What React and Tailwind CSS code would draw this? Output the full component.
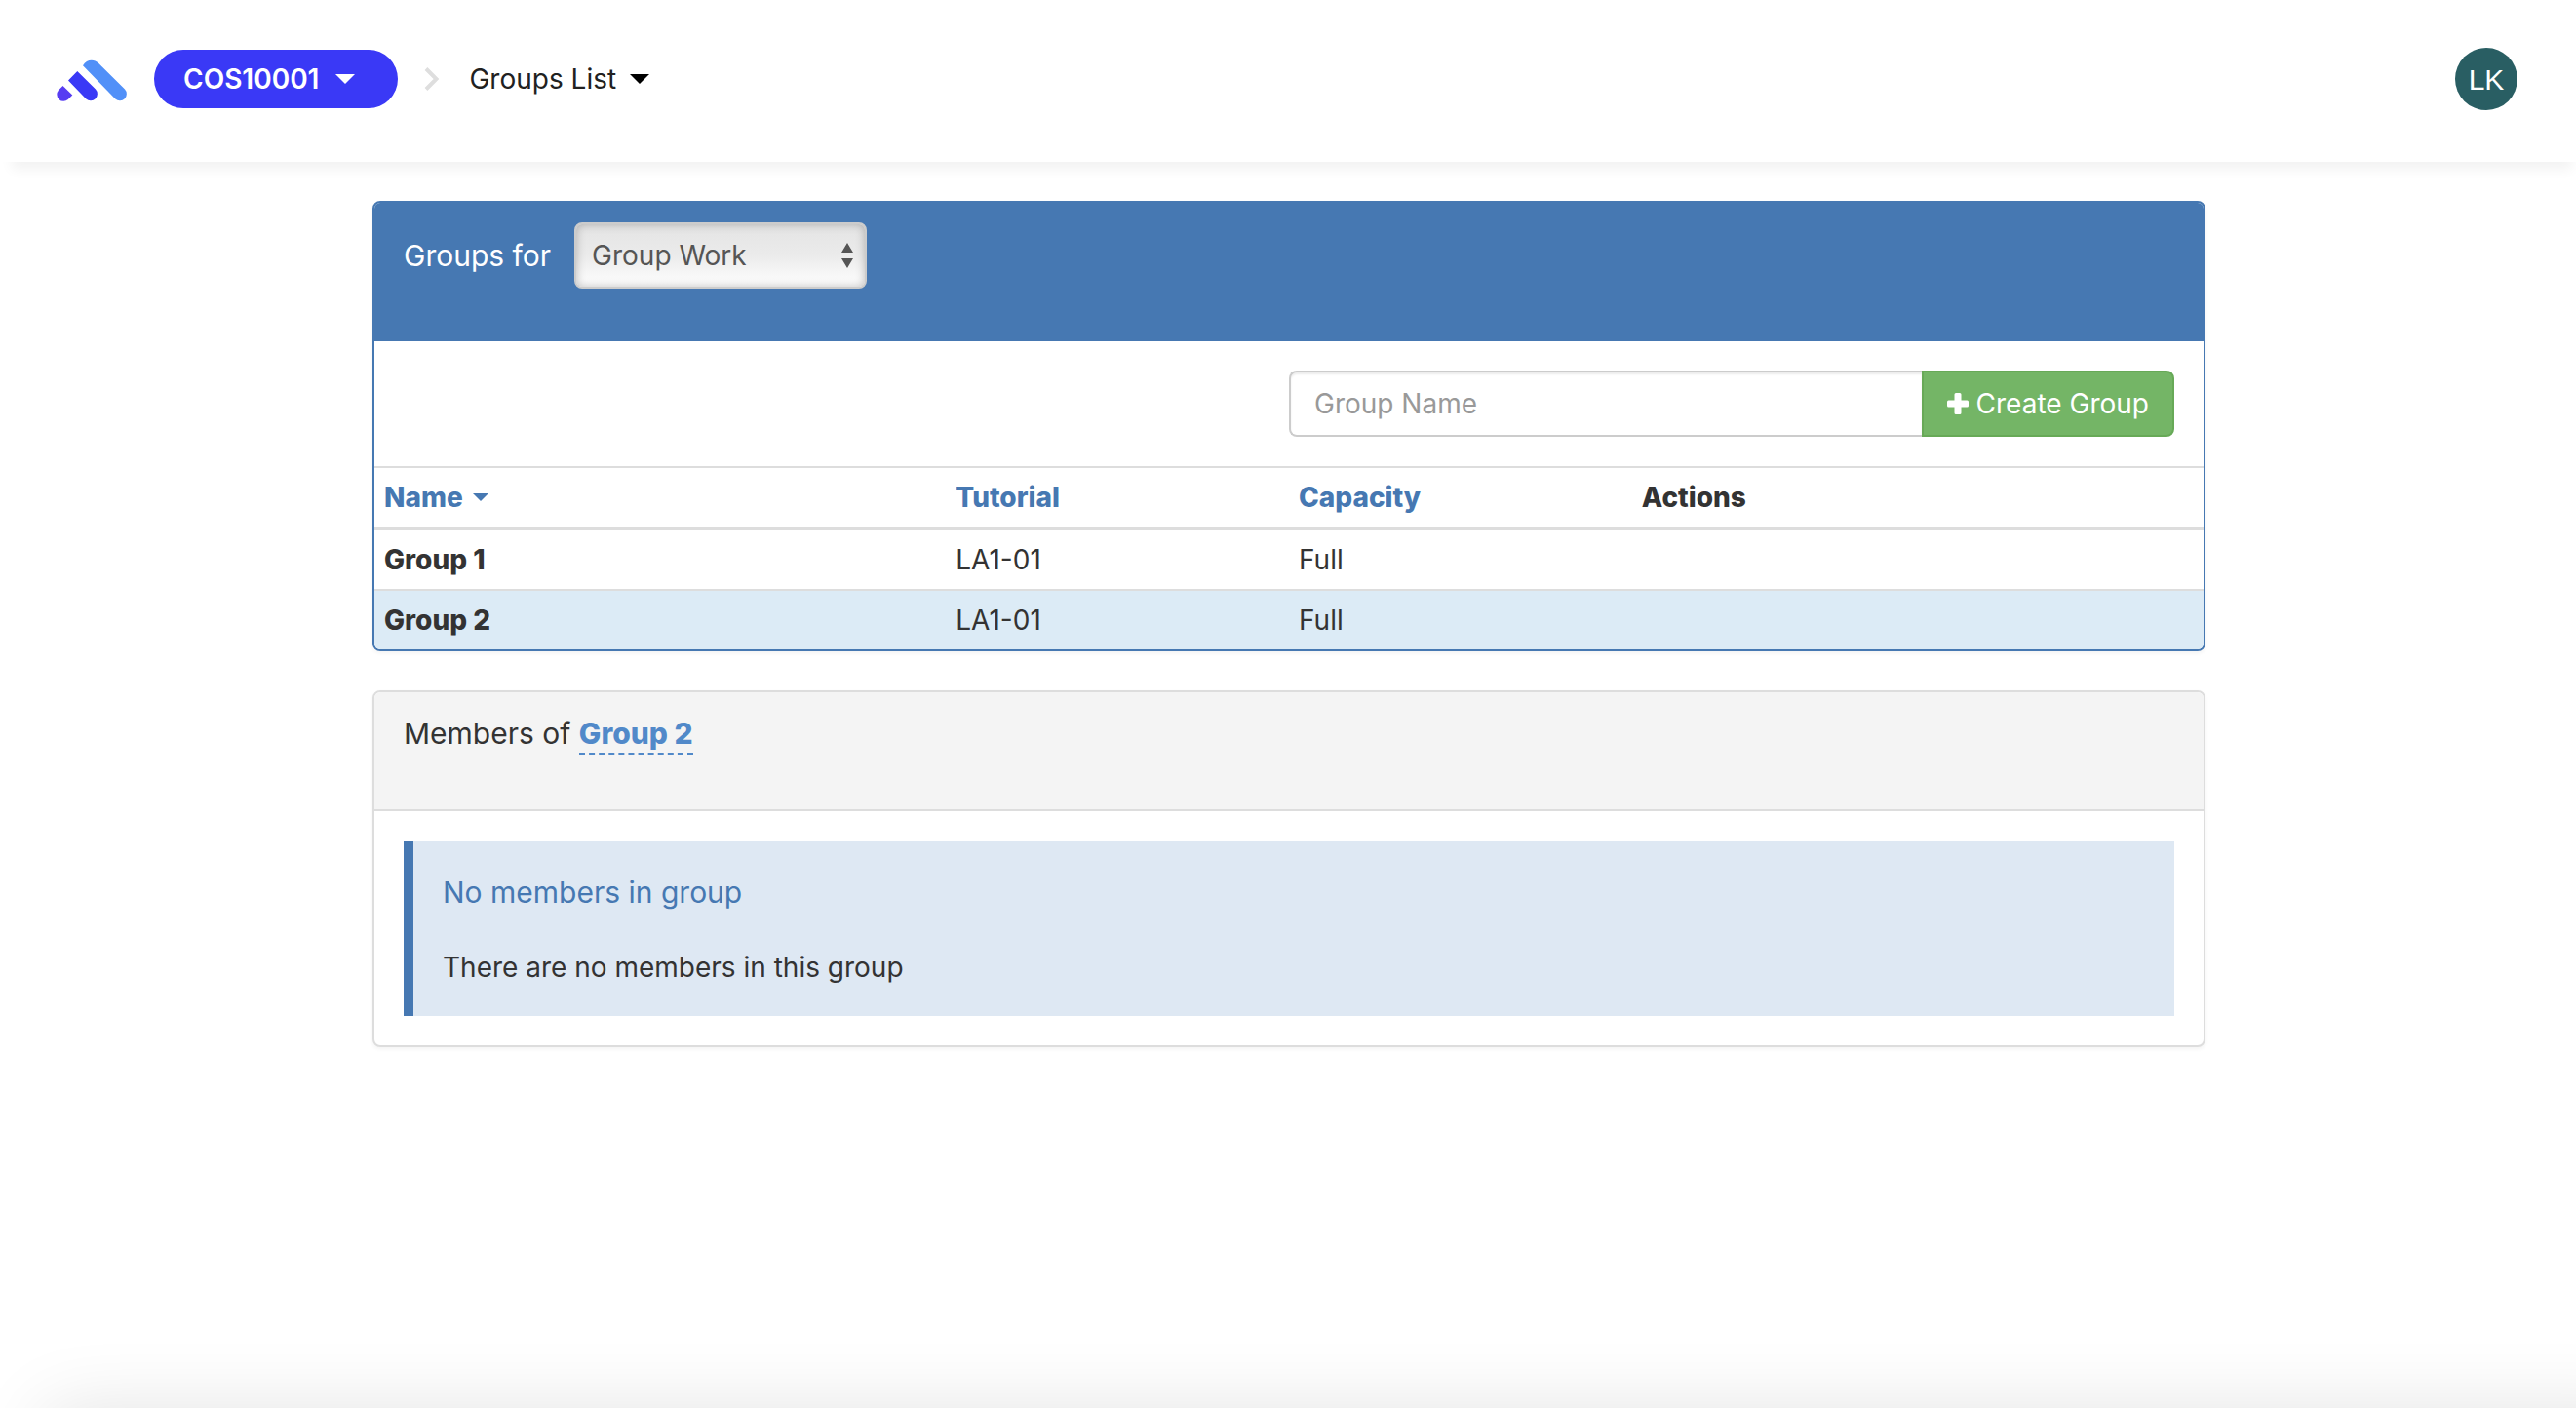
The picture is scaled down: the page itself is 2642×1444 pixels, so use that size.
const groups = [
  { name: "Group 1", tutorial: "LA1-01", capacity: "Full", selected: false },
  { name: "Group 2", tutorial: "LA1-01", capacity: "Full", selected: true },
];

function Logo() {
  return (
    <svg viewBox="0 -4 72 46" className="h-[46px] w-[72px]" aria-hidden="true">
      <path d="M6.5 26 L16.3 35.5 L11.8 40 A6.8 6.8 0 0 1 2 30.6 Z" fill="#573cf2" />
      <path d="M21.3 11 L40 29.6 A6.9 6.9 0 0 1 30.3 39.4 L12 20.6 Z" fill="#3a39f6" />
      <path d="M27 5.2 C31 -1.5 38.5 -1.5 43 2.8 L70 29.6 A6.9 6.9 0 0 1 60.3 39.4 Z" fill="#5190f8" />
    </svg>
  );
}

function Caret({ className }) {
  return (
    <svg viewBox="0 0 20 10" className={className} fill="currentColor" aria-hidden="true">
      <path d="M0 0h20L10 10z" />
    </svg>
  );
}

function Header() {
  return (
    <header className="flex h-[166px] items-center bg-white pb-1 pl-[58px] pr-[60px] shadow-[4px_16px_12px_-8px_rgba(0,0,0,0.05)]">
      <a href="#home" aria-label="Home">
        <Logo />
      </a>
      <button
        type="button"
        className="ml-7 flex h-[60px] items-center rounded-[30px] bg-[#3a39f6] pl-[30px] pr-11 font-semibold text-white"
      >
        COS10001
        <Caret className="ml-[17px] h-2.5 w-5" />
      </button>
      <svg viewBox="0 0 16 24" className="ml-[27px] h-6 w-4" fill="none" stroke="#dedede" strokeWidth="4" aria-hidden="true">
        <path d="M2 1.5 12.5 12 2 22.5" />
      </svg>
      <button type="button" className="ml-[30px] flex h-[60px] items-center text-[#212121]">
        Groups List
        <Caret className="ml-3.5 h-2.5 w-5 text-black" />
      </button>
      <button
        type="button"
        aria-label="Account"
        className="ml-auto flex size-16 items-center justify-center rounded-full bg-[#295e63] font-['Liberation_Sans',sans-serif] text-[30px] text-white"
      >
        LK
      </button>
    </header>
  );
}

function GroupsPanel() {
  return (
    <section className="overflow-hidden rounded-lg border-2 border-[#4678b2] bg-white shadow-[0_2px_4px_rgba(0,0,0,0.05)]">
      <div className="flex items-center bg-[#4678b2] px-[30px] pb-[54px] pt-5 text-white">
        <label htmlFor="group-set" className="text-[30px]">
          Groups for
        </label>
        <div className="relative ml-6 w-[300px]">
          <select
            id="group-set"
            className="h-[68px] w-full appearance-none rounded-lg border-2 border-[#ccc] bg-linear-to-b from-[#e4e4e4] via-[#ebebeb] to-white px-4 text-[#555] shadow-[inset_0_0_10px_rgba(0,0,0,0.25)]"
          >
            <option>Group Work</option>
          </select>
          <svg
            viewBox="0 0 12 26"
            className="pointer-events-none absolute right-3.5 top-[21px] h-[26px] w-3"
            fill="#555"
            aria-hidden="true"
          >
            <path d="M6 0l6 10H0zM6 26l6-10H0z" />
          </svg>
        </div>
      </div>

      <form className="flex justify-end p-[30px]" onSubmit={(e) => e.preventDefault()}>
        <div className="flex w-1/2">
          <input
            type="text"
            aria-label="Group Name"
            placeholder="Group Name"
            className="h-[68px] min-w-0 flex-1 rounded-l-lg border-2 border-r-0 border-[#ccc] bg-white px-6 text-[#555] shadow-[inset_0_2px_2px_rgba(0,0,0,0.075)] placeholder:text-[#999]"
          />
          <button
            type="submit"
            className="flex h-[68px] items-center rounded-r-lg border-2 border-[#67a957] bg-[#74b566] px-6 text-white"
          >
            <svg viewBox="0 0 22 22" className="mr-2 size-[22px]" fill="currentColor" aria-hidden="true">
              <path d="M9 0h4a1.500 1.500 0 0 1 1.500 1.500v6h6A1.500 1.500 0 0 1 22 9v4a1.500 1.500 0 0 1-1.500 1.500h-6v6A1.500 1.500 0 0 1 13 22H9a1.500 1.500 0 0 1-1.500-1.500v-6h-6A1.500 1.500 0 0 1 0 13V9a1.500 1.500 0 0 1 1.500-1.500h6v-6A1.500 1.500 0 0 1 9 0z" />
            </svg>
            Create Group
          </button>
        </div>
      </form>

      <table className="w-full table-fixed border-t-2 border-[#ddd] text-left leading-10">
        <thead>
          <tr className="border-b-4 border-[#ddd]">
            <th className="w-5/16 px-2.5 py-2.5 font-extrabold">
              <a href="#name" className="inline-flex items-center text-[#4678b2]">
                Name
                <Caret className="ml-2.5 h-2 w-4" />
              </a>
            </th>
            <th className="w-3/16 px-2.5 py-2.5 font-extrabold">
              <a href="#tutorial" className="text-[#4678b2]">Tutorial</a>
            </th>
            <th className="w-3/16 px-2.5 py-2.5 font-extrabold">
              <a href="#capacity" className="text-[#4678b2]">Capacity</a>
            </th>
            <th className="w-5/16 px-2.5 py-2.5 font-extrabold">Actions</th>
          </tr>
        </thead>
        <tbody className="divide-y-2 divide-[#ddd]">
          {groups.map((g) => (
            <tr key={g.name} className={g.selected ? "bg-[#dcebf6]" : ""}>
              <td className="px-2.5 py-2.5 font-extrabold">{g.name}</td>
              <td className="px-2.5 py-2.5">{g.tutorial}</td>
              <td className="px-2.5 py-2.5">{g.capacity}</td>
              <td className="px-2.5 py-2.5" />
            </tr>
          ))}
        </tbody>
      </table>
    </section>
  );
}

function MembersPanel() {
  return (
    <section className="mt-10 overflow-hidden rounded-lg border-2 border-[#ddd] bg-white shadow-[0_2px_4px_rgba(0,0,0,0.05)]">
      <div className="border-b-2 border-[#ddd] bg-[#f4f4f4] px-[30px] pb-14 pt-[22px]">
        <h2 className="text-[30px] leading-10">
          Members of{" "}
          <a href="#group-2" className="inline-block border-b-2 border-dashed border-[#5189c9] font-extrabold text-[#5189c9]">
            Group 2
          </a>
        </h2>
      </div>
      <div className="p-[30px]">
        <div className="border-l-10 border-[#4678b2] bg-[#dee8f3] p-[30px]">
          <h3 className="text-[30px] leading-[46px] text-[#4678b2]">No members in group</h3>
          <p className="mt-[34px] leading-10">There are no members in this group</p>
        </div>
      </div>
    </section>
  );
}

export default function App() {
  return (
    <div className="flex min-h-screen flex-col overflow-hidden bg-white font-[Inter,sans-serif] text-[28px] text-[#333] [font-optical-sizing:none]">
      <Header />
      <main className="mx-auto mt-10 w-full max-w-[1882px] pl-0.5">
        <GroupsPanel />
        <MembersPanel />
      </main>
      <footer className="mt-auto h-0">
        <div className="-mr-20 ml-12 h-40 shadow-[0_4px_80px_rgba(0,0,0,0.12)]" />
      </footer>
    </div>
  );
}
